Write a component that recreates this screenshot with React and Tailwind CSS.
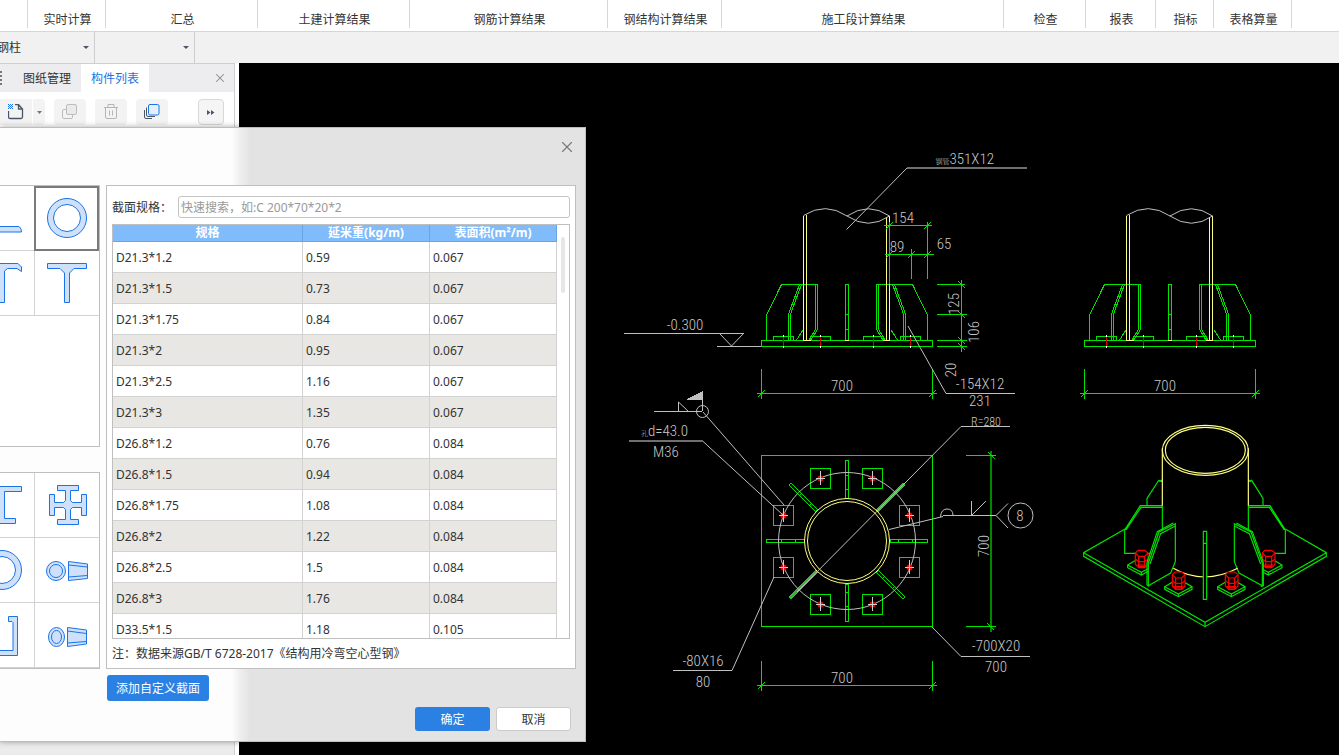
import React, { useState } from 'react';
import { X } from 'lucide-react';

const ribbonGroups = [
  { name: '', width: 'w-7' },
  { name: '实时计算', width: 'w-[78px]' },
  { name: '汇总', width: 'w-[152px]' },
  { name: '土建计算结果', width: 'w-[152px]' },
  { name: '钢筋计算结果', width: 'w-[198px]' },
  { name: '钢结构计算结果', width: 'w-[114px]' },
  { name: '施工段计算结果', width: 'w-[282px]' },
  { name: '检查', width: 'w-[82px]' },
  { name: '报表', width: 'w-[70px]' },
  { name: '指标', width: 'w-[58px]' },
  { name: '表格算量', width: 'w-[78px]' },
];

const sections = [
  ['D21.3*1.2', '0.59', '0.067'],
  ['D21.3*1.5', '0.73', '0.067'],
  ['D21.3*1.75', '0.84', '0.067'],
  ['D21.3*2', '0.95', '0.067'],
  ['D21.3*2.5', '1.16', '0.067'],
  ['D21.3*3', '1.35', '0.067'],
  ['D26.8*1.2', '0.76', '0.084'],
  ['D26.8*1.5', '0.94', '0.084'],
  ['D26.8*1.75', '1.08', '0.084'],
  ['D26.8*2', '1.22', '0.084'],
  ['D26.8*2.5', '1.5', '0.084'],
  ['D26.8*3', '1.76', '0.084'],
  ['D33.5*1.5', '1.18', '0.105'],
];

const shapes = {
  angle: <path d="M8.5 .5h5.5v28H36q3 0 3.5 5.5H8.5z" />,
  ring: <><circle cx="20" cy="20" r="19.5" /><circle cx="20" cy="20" r="13.5" fill="#fff" /></>,
  channel: <path d="M17 .5H36l3.5 3.500V8.500L35 5.500H25.500L22.500 8V39.500H17z" />,
  tee: <path d="M.5 .5h39v5H27L22.500 10v29.500h-5V10L13 5.500H.5z" />,
  iBeam: <path d="M1 1.500H39.500v5H22.500v27H33.500v5H5v-5H17v-27H1z" />,
  cross: <path d="M10.500 .5h21v5h-8v10l2 2h9v-8h5v21h-5v-8h-9l-2 2v10h8v5h-21v-5h8v-10l-2-2h-9v8h-5v-21h5v8h9l2-2v-10h-8z" />,
  cone: (
    <>
      <circle cx="9" cy="21" r="9.500" /><circle cx="9" cy="21" r="6.500" />
      <path d="M21.500 11.500L40.500 14v14.500L21.500 30.500zM21.500 15L40.500 17M21.500 27L40.500 25.500" />
    </>
  ),
  oval: (
    <>
      <ellipse cx="9.500" cy="22" rx="8" ry="9.500" /><ellipse cx="9.500" cy="22" rx="5" ry="6.500" />
      <path d="M20.500 12.500L39.500 15v14L20.500 31.500zM20.500 16L39.500 18.500M20.500 28L39.500 26.500" />
    </>
  ),
  lipped: <path d="M26.500 1.500h9v39H6v-5H31v-28l-1-1h-3.500z" />,
};

function ShapeCell({ shape, label, selected, onClick }) {
  return (
    <button
      aria-label={label}
      onClick={onClick}
      className={`flex h-[65px] w-[65px] shrink-0 items-center justify-center bg-white ${
        selected ? 'border-2 border-[#7a7a7a] pb-0.5' : 'border-b border-l border-[#d2d2d2]'
      }`}
    >
      <svg width="40" height="40" viewBox="0 0 40 40" className="shrink-0 overflow-visible" fill="#cfe1fa" stroke="#1a73e8">
        {shapes[shape]}
      </svg>
    </button>
  );
}

function Combo({ label, value }) {
  return (
    <div className="-ml-px grid w-[101px] items-center border-r border-[#cdcdcd]">
      <select aria-label={label} defaultValue={value} className="col-start-1 row-start-1 h-full w-full appearance-none bg-transparent pl-[3px] outline-none">
        <option>{value}</option>
      </select>
      <svg width="6" height="3" viewBox="0 0 6 3" className="pointer-events-none col-start-1 row-start-1 mr-[5px] justify-self-end">
        <path d="M0 0h6L3 3z" fill="#4a5568" />
      </svg>
    </div>
  );
}

const cadText = 'font-["Liberation_Sans_Narrow","Roboto_Condensed","Noto_Sans_CJK_SC",sans-serif] font-light';

function Label({ x, y, size = 15, rotate, anchor = 'middle', children }) {
  return (
    <text
      x={x}
      y={y}
      fontSize={size}
      textAnchor={anchor}
      fill="#c8c8c8"
      stroke="none"
      className={cadText}
      transform={rotate ? `rotate(-90 ${x} ${y})` : undefined}
    >
      {children}
    </text>
  );
}

// half of the stiffeners, mirrored for the other side
function Stiffeners() {
  return (
    <>
      <path d="M5.500 340V315L20.500 284.500H56.500V329.500L50 340M38.500 284.500L27.500 314V340M40.500 284.500L29.500 314V340M54.500 284.500V329.500L48 340M42 330L35.500 340" />
      <path d="M12.500 340V336.500H32.500V340M49.500 340V336.500H69.500V340" />
      <path d="M22.500 336V347M59.500 336V347" stroke="#e00000" />
      <path d="M22.500 335V337M22.500 346V348M59.500 335V337M59.500 346V348" stroke="#fff" />
    </>
  );
}

function Elevation({ x }) {
  return (
    <g transform={`translate(${x} 0)`}>
      <path d="M.5 340.500H171.500V346.500H.5z" />
      <Stiffeners />
      <g transform="translate(172 0) scale(-1 1)"><Stiffeners /></g>
      <path d="M84.500 284.500H87.500V340.500H84.500zM84.500 314.500H87.500M84.500 329.500H87.500" />
      <path d="M42.500 216V340.500M45.500 215V340.500M42.500 340.500H50M84 340.500H88M122 340.500H129M125.500 217V340.500M128.500 216V340.500" stroke="#ffff80" />
      <path d="M42.500 215.500Q64.500 201.500 86 216T128.500 216M86 216Q107.500 201.500 128.500 216" stroke="#c0c0c0" shapeRendering="auto" />
      <WidthDim y={393.5} />
    </g>
  );
}

function WidthDim({ y }) {
  return (
    <g>
      <path d={`M-4.500 ${y}H176M.5 ${y - 25}V${y + 5}M171.500 ${y - 25}V${y + 5}`} />
      <path d={`M-3 ${y + 3.500}L4 ${y - 3.500}M168 ${y + 3.500}L175 ${y - 3.500}`} />
      <Label x={81} y={y - 3}>700</Label>
    </g>
  );
}

const bolts = [
  [783.5, 515.5], [820.5, 478.5], [872.5, 478.5], [909.5, 515.5],
  [909.5, 567.5], [872.5, 604.5], [820.5, 604.5], [783.5, 567.5],
];

function PlanView() {
  return (
    <g>
      <path d="M761.500 455.500H932.500V626.500H761.500z" />
      {[0, 45, 90, 135, 180, 225, 270, 315].map((a) => (
        <path
          key={a}
          d="M890 539.500H927.500V542.500H890zM898.500 539.500V542.500M912.500 539.500V542.500"
          fill={a === 135 || a === 315 ? '#3fae3f' : 'none'}
          transform={`rotate(${a} 847 541)`}
        />
      ))}
      {bolts.map(([x, y]) => (
        <rect key={`${x}-${y}`} x={x - 10} y={y - 10} width="20" height="20" />
      ))}
      <g shapeRendering="auto">
        <circle cx="847" cy="541" r="68.500" stroke="#c0c0c0" />
        <circle cx="847" cy="541" r="42.500" stroke="#ffff80" />
        <circle cx="847" cy="541" r="39.500" stroke="#ffff80" />
        {bolts.map(([x, y]) => <circle key={`${x}-${y}`} cx={x} cy={y} r="3" fill="#f00" stroke="none" />)}
      </g>
      <path stroke="#d0d0d0" d={bolts.map(([x, y]) => `M${x - 5} ${y}h9M${x} ${y - 8}v14`).join('')} />
      <path d="M991 451V632" stroke="#008800" strokeWidth="2" />
      <path d="M966 455.500H996M966 626.500H996M988 452L995 459M987 623L994 630" />
    </g>
  );
}

function Bolt3d({ x, y }) {
  return (
    <g transform={`translate(${x} ${y})`}>
      <path d="M-41 46L0 22L41 46V54L0 76L-41 54zM-41 46L0 68L41 46M0 68V76" fill="#000" />
      <g stroke="#f00">
        <path d="M-18 10L-10 2H10L20 10V44L10 54H-8L-18 44z" fill="#000" />
        <path d="M-18 10L-8 20H10L20 10M-8 20V54M10 20V54M-18 28L-8 36H10L20 28M-14 46H14M-10 50H12" />
      </g>
    </g>
  );
}

// drawn at three times its size
function IsoView() {
  return (
    <g transform="translate(1070 415) scale(.33333)" strokeWidth="3.500" shapeRendering="auto">
      <path d="M165 342L41 413V424L405 635L769 424V413L646 342M41 413L405 622L769 413M405 622V635" />
      <path d="M231 270V250L266 196L277 200M579 270V250L545 196L535 200M268 200L277 194M543 200L535 194" />
      <path d="M277 272H211L164 345V415H241M277 277H213L168 345M535 272H600L646 345V415H578M535 277H598L643 345" />
      <Bolt3d x={214} y={404} />
      <Bolt3d x={595} y={404} />
      <path d="M316 326L267 351L235 445V512L302 474L316 440zM493 326L543 351L577 445V512L507 474L493 440z" fill="#000" />
      <path d="M310 324L262 350L231 443V510L238 514M316 333L272 356L240 447M499 324L547 350L580 443V512L572 514M493 333L538 356L572 447" />
      <path d="M277 345V272M535 345V272" />
      <g stroke="#ffff80">
        <path d="M277 272V100M535 272V100" />
        <path d="M310 460Q402 512 503 460" />
        <ellipse cx="406" cy="106" rx="129" ry="75" />
        <ellipse cx="406" cy="106" rx="120" ry="69" />
      </g>
      <path d="M400 349H410V553H400zM400 385H410" fill="#000" />
      <Bolt3d x={325} y={469} />
      <Bolt3d x={484} y={469} />
    </g>
  );
}

function Drawing() {
  return (
    <svg viewBox="239 63 1100 692" preserveAspectRatio="xMinYMin meet" className="h-full w-full" fill="none" stroke="#00e400" shapeRendering="crispEdges">
      <Elevation x={761} />
      <Elevation x={1084} />
      <g transform="translate(761 0)"><WidthDim y={685.5} /></g>
      <PlanView />
      <IsoView />

      {/* side dimensions */}
      <path d="M884 225.500H932M889.500 222V284M927.500 222V279M885 254.500H934M911.500 249V279M937 284.500H965M937 314.500H967M937 340.500H967M937 346.500H967M961.500 280V352" />
      <path d="M886 229L893 222M924 229L931 222M886 258L893 251M908 258L915 251M924 258L931 251M958 281L965 288M958 311L965 318M958 337L965 344M958 343L965 350" />

      {/* leaders and symbols */}
      <g stroke="#c0c0c0">
        <g shapeRendering="auto">
          <path d="M846.500 229.500L907 168M908 326L946 393.500M961 426.500L797 592M703 412L784 505M702 440.500L783 515M732 670.500L774 577M932 627L961 656.500M889 529.500L943 516.500" />
          <path d="M719.500 333.500L731.500 346L743.500 333.500M678.500 411V402L688 411" />
          <circle cx="702.500" cy="411.500" r="6" />
          <path d="M940.500 517Q941 509 947 509T953 515.500M971.500 501V515.500L986 501M1008 503.500L996 515.500L1008 528" />
          <circle cx="1020.500" cy="515.500" r="12.500" />
        </g>
        <path d="M624 333.500H744M717 346.500H761M946 393.500H1015M961 426.500H1010M654 411.500H702M702.500 392V411M673 670.500H732M961 656.500H1030M943 515.500H996" />
        <path d="M907 168H1027M629 441H702" stroke="#707070" strokeWidth="2" />
        <path d="M687 399.500L702.500 392V399.500z" fill="#c0c0c0" />
      </g>

      <Label x={994} y={164} anchor="end"><tspan fontSize="7">钢管</tspan>351X12</Label>
      <Label x={903} y={223}>154</Label>
      <Label x={897} y={252}>89</Label>
      <Label x={944} y={249}>65</Label>
      <Label x={959} y={304} rotate>125</Label>
      <Label x={979} y={332} rotate>106</Label>
      <Label x={956} y={370} rotate>20</Label>
      <Label x={980} y={389}>-154X12</Label>
      <Label x={980} y={406}>231</Label>
      <Label x={986} y={426} size={12}>R=280</Label>
      <Label x={685} y={330}>-0.300</Label>
      <Label x={688} y={436} anchor="end"><tspan fontSize="7">孔</tspan>d=43.0</Label>
      <Label x={666} y={457}>M36</Label>
      <Label x={703} y={666}>-80X16</Label>
      <Label x={703} y={687}>80</Label>
      <Label x={1020} y={521}>8</Label>
      <Label x={989} y={546} rotate>700</Label>
      <Label x={996} y={651}>-700X20</Label>
      <Label x={996} y={672}>700</Label>
    </svg>
  );
}

export default function App() {
  const [selected, setSelected] = useState('ring');
  const [query, setQuery] = useState('');

  return (
    <main className='relative flex h-screen flex-col overflow-hidden bg-black font-["Noto_Sans","Noto_Sans_CJK_SC",sans-serif] text-xs text-[#333]'>
      <header className="flex h-8 shrink-0 items-start border-b border-[#d6d6d6] bg-white">
        {ribbonGroups.map((g, i) => (
          <div key={i} className={`${g.width} h-7 shrink-0 border-r border-[#d6d6d6] pt-3 pl-0.5 text-center leading-4 whitespace-nowrap`}>
            {g.name}
          </div>
        ))}
      </header>

      <div className="flex h-[31px] shrink-0 bg-[#f1f1f1]">
        <div className="-ml-[5px] flex">
          <Combo label="构件类型" value="钢柱" />
          <Combo label="构件" value="" />
        </div>
      </div>

      <div className="flex min-h-0 flex-1">
        <aside className="flex w-[239px] shrink-0 flex-col bg-white">
          <div className="flex w-[235px] flex-1 flex-col border-t border-r border-[#cfcfd2]">
            <div className="flex h-7 items-center bg-[#ededf0]">
              <svg width="2" height="14" className="shrink-0">
                <path d="M0 1h2M0 5h2M0 9h2M0 13h2" stroke="#777" strokeWidth="2" />
              </svg>
              <button className="ml-[11px] h-full w-[68px] px-2.5 pt-0.5">图纸管理</button>
              <button className="h-full w-[68px] bg-white pt-0.5 text-[#1a73e8]">构件列表</button>
              <button aria-label="关闭面板" className="mr-[7px] ml-auto text-[#8a8a8a]">
                <X size={14} strokeWidth={1.8} />
              </button>
            </div>
            <div className="flex flex-1 items-start bg-gradient-to-b from-white from-80% to-[#ebebeb] pt-[7px] text-[#4a5568]">
              <button aria-label="新建" className="flex h-[26px] w-8 items-center justify-center rounded-r-none bg-[#f3f3f3]">
                <svg width="16" height="16" fill="none" stroke="currentColor">
                  <path d="M.5 7V13q0 1.500 1.500 1.500H13q1.500 0 1.500-1.500V5L10.500 .5H7M10.500 .5V5h4" strokeWidth="1.300" />
                  <path d="M0 .5h5M0 2.500h5M0 4.500h5" stroke="#1a73e8" strokeDasharray="1 1" />
                  <path d="M1 1.500h4M1 3.500h4" stroke="#1a73e8" strokeDasharray="1 1" />
                </svg>
              </button>
              <button aria-label="新建选项" className="ml-px flex h-[26px] w-3 items-center justify-center rounded-r bg-[#f3f3f3]">
                <svg width="5" height="3"><path d="M0 0h5L2.500 3z" fill="#777" /></svg>
              </button>
              <button aria-label="复制" className="ml-[9px] flex h-[26px] w-8 items-center justify-center rounded bg-[#f3f3f3]">
                <svg width="16" height="16" fill="#eaeaea" stroke="#bdbdbd">
                  <rect x=".5" y="5.500" width="10" height="9" rx="1.500" fill="none" />
                  <rect x="4.500" y=".5" width="10" height="10" rx="1.500" />
                </svg>
              </button>
              <button aria-label="删除" className="ml-[9px] flex h-[26px] w-8 items-center justify-center rounded bg-[#f3f3f3]">
                <svg width="14" height="16" fill="none" stroke="#b5b5b5">
                  <path d="M0 3.500H14M4 3V.5h6V3M1.500 3.500V13q0 1.500 1.500 1.500h8q1.500 0 1.500-1.500V3.500M5.500 6.500v5M8.500 6.500v5" />
                </svg>
              </button>
              <button aria-label="层间复制" className="ml-[9px] flex h-[26px] w-8 items-center justify-center rounded bg-[#f3f3f3]">
                <svg width="16" height="16" fill="none" stroke="currentColor">
                  <rect x="4.500" y=".5" width="10.500" height="10.500" rx="1.500" fill="#e4effd" stroke="#1a73e8" />
                  <path d="M2.500 3.500V11q0 1.500 1.500 1.500h7M.5 6V13q0 1.500 1.500 1.500h6" />
                </svg>
              </button>
              <button aria-label="更多" className="mr-2.5 ml-auto flex h-[26px] w-[26px] items-center justify-center rounded border border-[#d9d9d9] bg-[#f5f5f5]">
                <svg width="8" height="5"><path d="M0 0l3.500 2.500L0 5zM4 0l3.500 2.500L4 5z" fill="currentColor" /></svg>
              </button>
            </div>
          </div>
        </aside>
        <div className="min-w-0 flex-1 bg-black">
          <Drawing />
        </div>
      </div>

      {/* section library dialog */}
      <section
        role="dialog"
        aria-label="截面"
        className="absolute top-[127px] left-0 w-[586px] border-y border-r border-[#bdbdbd] bg-[linear-gradient(to_right,#fdfdfd_232px,#f0f0f0_239px,#e3e3e3_250px)] shadow-[0_0_6px_rgba(0,0,0,0.35)]"
      >
        <div className="flex h-[57px] items-start justify-end pt-2.5 pr-[9px]">
          <button aria-label="关闭" className="text-[#777]">
            <X size={18} strokeWidth={1.5} />
          </button>
        </div>

        <div className="flex gap-1.5 pr-[9px]">
          <div className="flex w-[100px] shrink-0 flex-col justify-between">
            <div className="h-[262px] overflow-hidden border-y border-r border-[#bfbfbf] bg-white">
              {[['angle', 'ring'], ['channel', 'tee']].map((row) => (
                <div key={row[0]} className="flex justify-end">
                  {row.map((s) => <ShapeCell key={s} shape={s} label={s} selected={selected === s} onClick={() => setSelected(s)} />)}
                </div>
              ))}
            </div>
            <div className="h-[197px] overflow-hidden border-y border-r border-[#bfbfbf] bg-white">
              {[['iBeam', 'cross'], ['pipe', 'cone'], ['lipped', 'oval']].map((row) => (
                <div key={row[0]} className="flex justify-end">
                  {row.map((s) => (
                    <ShapeCell key={s} shape={s === 'pipe' ? 'ring' : s} label={s} selected={selected === s} onClick={() => setSelected(s)} />
                  ))}
                </div>
              ))}
            </div>
          </div>

          <div className="min-w-0 flex-1 border border-[#bfbfbf] bg-white px-[5px] pt-2.5">
            <div className="flex items-center">
              <label htmlFor="spec" className="w-[66px] pt-0.5 whitespace-nowrap">截面规格：</label>
              <input
                id="spec"
                value={query}
                onChange={(e) => setQuery(e.target.value)}
                placeholder="快速搜索，如:C 200*70*20*2"
                className="h-[22px] min-w-0 flex-1 rounded-[3px] border border-[#c4c4c4] px-0.5 outline-none placeholder:text-[#999]"
              />
            </div>

            <div className="relative mt-1.5 h-[415px] border border-[#bfbfbf]">
              <div className="h-full overflow-y-auto pr-3 [scrollbar-width:none]">
                <table className="w-full table-fixed border-separate border-spacing-0">
                  <thead>
                    <tr className="h-[17px] bg-[#80bbfb] leading-4 text-white">
                      <th className="w-[190px] border-r border-b border-[#66a5e8] p-0">规格</th>
                      <th className="border-r border-b border-[#66a5e8] p-0">延米重(kg/m)</th>
                      <th className="border-r border-b border-[#66a5e8] p-0">表面积(m²/m)</th>
                    </tr>
                  </thead>
                  <tbody>
                    {sections.filter((r) => r[0].includes(query)).map((row) => (
                      <tr key={row[0]} className="h-[31px] even:bg-[#e8e7e3]">
                        {row.map((v, i) => (
                          <td key={i} className="border-r border-b border-[#d2d2d2] pt-0.5 pr-0 pb-0 pl-[3px]">{v}</td>
                        ))}
                      </tr>
                    ))}
                  </tbody>
                </table>
              </div>
              <div className="absolute top-3 right-1 h-14 w-1 rounded-full bg-[#e6e6e6]" />
            </div>
            <p className="flex h-[29px] items-center">注：数据来源GB/T 6728-2017《结构用冷弯空心型钢》</p>
          </div>
        </div>

        <div className="pt-1.5 pl-[107px]">
          <button className="block h-[26px] w-[102px] rounded-[3px] bg-[#2b80e3] pt-0.5 text-white">添加自定义截面</button>
        </div>
        <div className="flex justify-end gap-1.5 pt-1.5 pr-3.5 pb-2.5">
          <button className="h-6 w-[75px] rounded-[3px] bg-[#2b80e3] pt-0.5 text-white">确定</button>
          <button className="h-6 w-[75px] rounded-[3px] border border-[#cbcbcb] bg-white pt-0.5">取消</button>
        </div>
      </section>
    </main>
  );
}
